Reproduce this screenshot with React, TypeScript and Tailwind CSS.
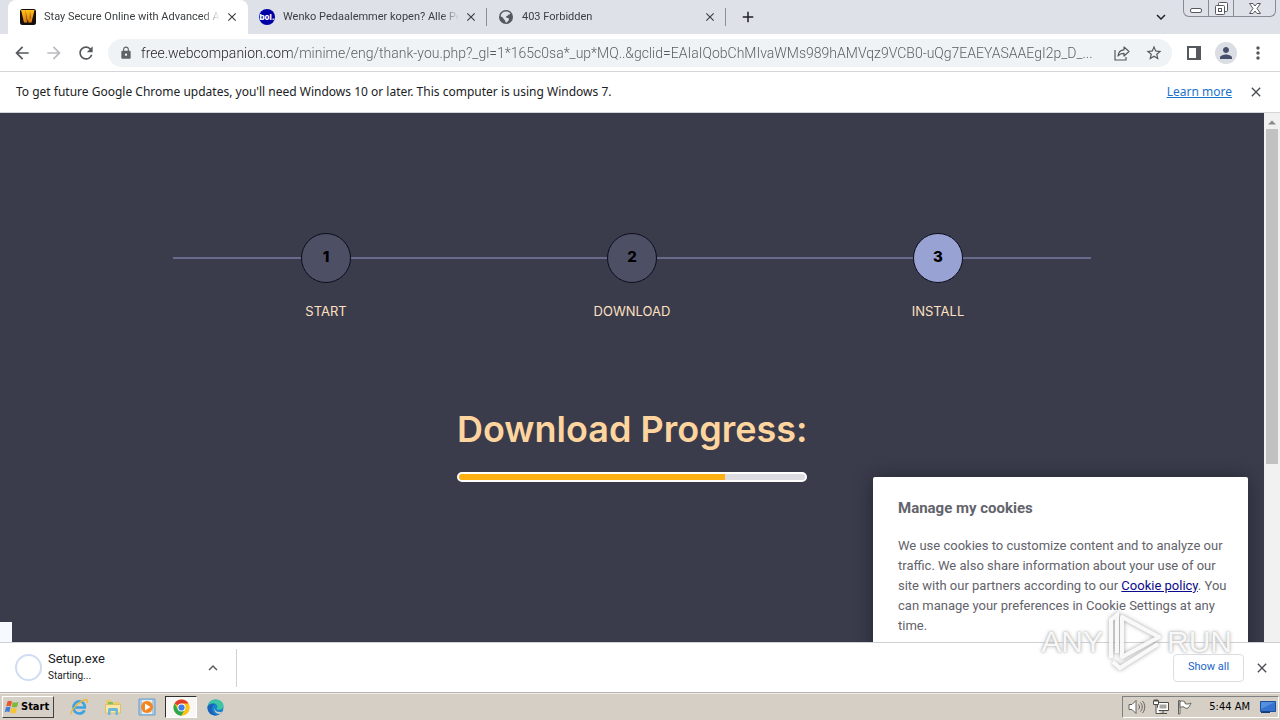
import type { ReactNode } from "react";
import {
  MdAdd,
  MdArrowBack,
  MdArrowForward,
  MdClose,
  MdKeyboardArrowDown,
  MdKeyboardArrowUp,
  MdLock,
  MdMoreVert,
  MdPerson,
  MdRefresh,
  MdStarBorder,
} from "react-icons/md";

const CompanionIcon = () => (
  <svg viewBox="0 0 16 16" className="size-4 shrink-0" aria-hidden="true">
    <defs>
      <linearGradient id="companion" x1="0" y1="0" x2="0" y2="1">
        <stop offset="0" stopColor="#ffc21c" />
        <stop offset="1" stopColor="#e07a10" />
      </linearGradient>
    </defs>
    <rect width="16" height="16" rx="2.5" fill="#15100b" />
    <path d="M1 1h13.500l-3 12.500H4z" fill="url(#companion)" />
    <path d="M5.500 1l1.800 8.500L6 13zM10 2l1 6.500L9.500 12z" fill="#7a4407" opacity=".65" />
    <path d="M7.800 10l.8 3.500H7z" fill="#15100b" />
  </svg>
);

const BolIcon = () => (
  <span className="flex size-4 shrink-0 items-center justify-center rounded-full bg-[#0000a4] pb-px font-['Inter',sans-serif] text-[8px] leading-none font-extrabold text-white">
    bol.
  </span>
);

const GlobeIcon = () => (
  <svg viewBox="0 0 16 16" className="size-4 shrink-0" aria-hidden="true">
    <circle cx="8" cy="8" r="7" fill="#55585e" />
    <path d="M8 2.500c2 0 3.500.8 4.500 2-.8 1.200-2 .8-2.500 1.800-.5 1-2 .7-2 1.700s1.500.6 2.500 1.200c.8.600.5 2-.4 2.800-.8.800-1.100 1.500-2.100 1.500-.8 0-.4-1.300-.9-2.100-.5-.8-1.600-.8-1.600-1.900C5.500 8.500 3.500 8 2.600 7.200 3 4.500 5.200 2.500 8 2.500z" fill="#dee1e8" />
  </svg>
);

const ShareIcon = () => (
  <svg viewBox="0 0 16 16" className="size-4" fill="none" stroke="currentColor" strokeWidth="1.200" aria-hidden="true">
    <path d="M1 5v10h11v-3" />
    <path d="M4 11c.4-4 2.600-6 6-6.200V2l5 4.500-5 4.500V8.300C7.500 8.300 5.600 9 4 11z" strokeLinejoin="round" />
  </svg>
);

const SidePanelIcon = () => (
  <svg viewBox="0 0 14 14" className="size-[14px]" aria-hidden="true">
    <path d="M0 0h14v14H0zM2 2v10h7V2z" fill="currentColor" fillRule="evenodd" />
  </svg>
);

const WindowsFlag = () => (
  <svg viewBox="0 0 16 16" className="size-4" aria-hidden="true">
    <path d="M3.500 2.500C5 1.500 6.500 1.500 8 2.500L6.800 7.500C5.300 6.600 3.800 6.600 2.200 7.500z" fill="#e8542c" />
    <path d="M8.800 2.900c1.700 1 3.200 1 5.700-.1l-1.300 5c-2 1-3.700 1-5.500 0z" fill="#7cb83e" />
    <path d="M2 8.300c1.500-.9 3-.9 4.600 0l-1.300 5c-1.500-1-3-1-4.600 0z" fill="#3f7fd6" />
    <path d="M7.500 8.800c1.700 1 3.400 1 5.500 0l-1.300 5c-2 1-3.700.9-5.500-.2z" fill="#f8c32c" />
  </svg>
);

const ExplorerIcon = () => (
  <svg viewBox="0 0 18 18" className="size-[18px]" aria-hidden="true">
    <path d="M3.500 9.500h11.300C15 5.800 12.600 3.300 9.300 3.300S3.500 6 3.500 9.500s2.500 6 5.800 6c2.500 0 4.400-1.200 5.200-3.300" fill="none" stroke="#3ba3e2" strokeWidth="2.600" />
    <path d="M1.500 16.500C-.5 13 10 2.500 16 1.500c1.800 0 1.500 2 .5 3.500" fill="none" stroke="#edb935" strokeWidth="1.300" />
  </svg>
);

const FolderIcon = () => (
  <svg viewBox="0 0 18 18" className="size-[18px]" aria-hidden="true">
    <path d="M2 2h5l1 2h8v11H2z" fill="#e9cb6c" />
    <path d="M4 4h5v3H4z" fill="#7fbf6a" />
    <path d="M1.500 6.500h15V15h-15z" fill="#f7e7a2" stroke="#d4b457" strokeWidth=".7" />
    <path d="M4 17v-5c0-1.500 1-2 2-2h6c1 0 2 .5 2 2v5h-2.500v-4h-5v4z" fill="#6fb6dc" />
  </svg>
);

const MediaIcon = () => (
  <svg viewBox="0 0 18 18" className="size-[18px]" aria-hidden="true">
    <path d="M1 1h16v16H1z" fill="#a9cbe6" stroke="#6b9cc4" />
    <path d="M4 2h10v14H4z" fill="#e3edf4" />
    <circle cx="9" cy="9" r="6" fill="#f5861f" />
    <path d="M7 5.500v7l5.500-3.500z" fill="#fff" />
  </svg>
);

const ChromeIcon = () => (
  <svg viewBox="0 0 18 18" className="size-[17px]" aria-hidden="true">
    <circle cx="9" cy="9" r="8.500" fill="#fbc116" />
    <path d="M9 9L1.640 4.750A8.500 8.500 0 0 1 16.360 4.750H9z" fill="#e33b2e" />
    <path d="M1.640 4.750L5.320 11.120 9 13.250 9 17.500A8.500 8.500 0 0 1 1.640 4.750z" fill="#2da94f" />
    <path d="M5.320 11.120h7.360L9 17.500A8.500 8.500 0 0 1 5 16.500z" fill="#2da94f" />
    <path d="M12.680 11.120L16.360 4.750A8.500 8.500 0 0 1 9 17.500z" fill="#fbc116" />
    <circle cx="9" cy="9" r="4.250" fill="#fff" />
    <circle cx="9" cy="9" r="3.300" fill="#3f7de8" />
  </svg>
);

const EdgeIcon = () => (
  <svg viewBox="0 0 18 18" className="size-[17px]" aria-hidden="true">
    <circle cx="9" cy="9" r="8.500" fill="#1583d0" />
    <path d="M.6 8C1.200 3.600 4.800.5 9.200.5c4.600 0 8.300 3 8.300 6.700 0 2.600-2 4.300-4.500 4.300-1.700 0-2.800-.6-2.800-1.300 0-.5.8-.8.8-2C11 6 9 4.700 6.500 4.700 3.900 4.700 1.800 6 .6 8z" fill="#3cc4a4" />
    <path d="M.6 8C2 5.900 4 4.700 6.500 4.700c1 0 2 .2 2.700.6C6.500 6 5.400 8 5.400 10.200c0 3 2 5.800 5.200 6.900C5 18.500-.2 14 .6 8z" fill="#1b62b8" />
    <path d="M8 9.500c0 3 3 5 6.500 4.200.8-.2 1.300-.5 1.900-.8-.5 1-1.400 2.100-2.400 2.900C10 16 7 13 8 9.500z" fill="#d4cdc4" />
  </svg>
);

const SpeakerIcon = () => (
  <svg viewBox="0 0 18 16" className="h-4 w-[18px]" fill="none" stroke="#63615e" aria-hidden="true">
    <path d="M1 5.500h3L8 1.500v13l-4-4H1z" fill="#fff" />
    <path d="M10.500 5.500c1.300 1.500 1.300 3.500 0 5M12.500 3.500c2.300 2.500 2.300 6.500 0 9M14.500 2c3 3.500 3 8.500 0 12" />
  </svg>
);

const NetworkIcon = () => (
  <svg viewBox="0 0 18 16" className="h-4 w-[18px]" fill="none" stroke="#4f4d4a" aria-hidden="true">
    <path d="M5.500 3.500h11v8h-11zM8 14.500h7M11 11.500v3" fill="#fff" />
    <path d="M7.500 5.500h7v4h-7z" fill="#a8a5a0" stroke="none" />
    <path d="M1.500 1.500h5v4h-5zM3 0v3M5 0v3M4 5.500v9h4" fill="#fff" />
  </svg>
);

const FlagIcon = () => (
  <svg viewBox="0 0 18 16" className="h-4 w-[18px]" fill="#fff" stroke="#63615e" aria-hidden="true">
    <path d="M2.500 15V1.500h1.500V15z" />
    <path d="M4 2.500c2-1 3.500-.5 5 .5v1.500c2 1 4 .5 6-.5-1 2.500-2 4-3 5-1.500.7-3 .2-4-1-1.500-.5-3 0-4 .5z" />
  </svg>
);

const DesktopIcon = () => (
  <svg viewBox="0 0 16 14" className="h-[14px] w-4" aria-hidden="true">
    <path d="M.5 1.500h15v10H.5z" fill="#3573cf" stroke="#1d4f9c" />
    <path d="M1 2h14L1 9z" fill="#5590e0" />
    <path d="M1 11.500h9V13H1z" fill="#163a78" />
  </svg>
);

interface TabProps {
  icon: ReactNode;
  title: string;
  selected?: boolean;
}

function Tab({ icon, title, selected = false }: TabProps) {
  return (
    <div
      className={
        selected
          ? "flex w-60 items-center rounded-t-lg bg-white pr-2 pl-3"
          : "my-2 flex w-[239px] items-center border-r border-[#8b8e94] pr-[7px] pl-[11px]"
      }
    >
      <button
        type="button"
        role="tab"
        aria-selected={selected}
        className="flex min-w-0 flex-1 items-center gap-2 text-left text-[#3c4043]"
      >
        {icon}
        <span className="min-w-0 flex-1 overflow-hidden mask-r-from-90% text-[11px] leading-4 whitespace-nowrap">{title}</span>
      </button>
      <button type="button" aria-label={`Close ${title}`} className="ml-1 flex size-4 items-center justify-center text-[#3c4043]">
        <MdClose className="size-[14px]" />
      </button>
    </div>
  );
}

function ToolButton({ label, children }: { label: string; children: ReactNode }) {
  return (
    <button type="button" aria-label={label} className="flex h-7 w-8 shrink-0 items-center justify-center text-[#55585d]">
      {children}
    </button>
  );
}

function WindowControls() {
  return (
    <div className="mr-1 flex h-[17px] rounded-b-md border border-t-0 border-[#888b94] text-[#55585f]">
      <button type="button" aria-label="Minimize" className="flex w-[25px] items-end justify-center border-r border-[#888b94] pb-[3px]">
        <svg viewBox="0 0 12 5" className="h-[5px] w-3" aria-hidden="true">
          <rect x=".5" y=".5" width="11" height="4" rx="1.500" fill="#fff" stroke="currentColor" />
        </svg>
      </button>
      <button type="button" aria-label="Restore" className="flex w-[25px] items-center justify-center border-r border-[#888b94]">
        <svg viewBox="0 0 13 13" className="size-[13px]" fill="#fff" stroke="currentColor" aria-hidden="true">
          <rect x="3.500" y=".5" width="9" height="9" rx="1" />
          <rect x=".5" y="3.500" width="9" height="9" rx="1" />
          <rect x="3.500" y="6.500" width="3" height="3" />
        </svg>
      </button>
      <button type="button" aria-label="Close window" className="flex w-[41px] items-center justify-center">
        <svg viewBox="0 0 12 11" className="h-[11px] w-3" fill="#fff" stroke="currentColor" aria-hidden="true">
          <path d="M.5.5h3.500L6 3 8 .5h3.500L8 5.500l3.500 5H8L6 8l-2 2.500H.5l3.500-5z" />
        </svg>
      </button>
    </div>
  );
}

const steps = [
  { number: 1, label: "START", circle: "bg-[#4d4f65]" },
  { number: 2, label: "DOWNLOAD", circle: "bg-[#4d4f65]" },
  { number: 3, label: "INSTALL", circle: "bg-[#98a3d3]" },
];

function Steps() {
  return (
    <ol className="mx-auto grid w-full max-w-[918px] grid-cols-3">
      {steps.map((step) => (
        <li key={step.number} className="flex flex-col items-center">
          <div className="flex w-full items-center">
            <span className="h-[2px] flex-1 bg-[#686a8c]" />
            <span
              className={`flex size-[50px] items-center justify-center rounded-full border border-[#0c0c1c] pb-[2px] font-['Inter',sans-serif] text-[15px] font-extrabold text-black ${step.circle}`}
            >
              {step.number}
            </span>
            <span className="h-[2px] flex-1 bg-[#686a8c]" />
          </div>
          <span className="mt-[18px] font-['Inter',sans-serif] text-[13px] leading-5 text-[#ffe0c0]">{step.label}</span>
        </li>
      ))}
    </ol>
  );
}

function Page() {
  const progress = 77;
  return (
    <main className="relative min-w-0 flex-1 overflow-hidden bg-[#3a3c4c] pt-[120px]">
      <Steps />
      <section className="mx-auto mt-20 w-[350px]">
        <h1 className="text-center font-['Inter',sans-serif] text-4xl leading-[56px] font-semibold whitespace-nowrap text-[#ffd59f]">
          Download Progress:
        </h1>
        <div
          role="progressbar"
          aria-label="Download progress"
          aria-valuenow={progress}
          className="mt-[15px] h-[10px] overflow-hidden rounded-full border-2 border-white bg-[#dcdce2]"
        >
          <div className="h-full bg-[#ffb011]" style={{ width: `${progress}%` }} />
        </div>
      </section>

      <aside className="absolute top-[364px] right-4 w-[375px] rounded-t-xs bg-white pt-5 pr-5 pb-8 pl-[25px] font-['Roboto',sans-serif] text-[#63636b] shadow-[0_0_20px_rgba(0,0,0,0.35)]">
        <h2 className="text-[15px] leading-[22px] font-bold">Manage my cookies</h2>
        <p className="mt-[17px] text-[13px] leading-5">
          We use cookies to customize content and to analyze our traffic. We also share information about your use of our
          site with our partners according to our{" "}
          <a href="#cookie-policy" className="text-[#0a0a8c] underline">
            Cookie policy
          </a>
          . You can manage your preferences in Cookie Settings at any time.
        </p>
      </aside>
      <div className="absolute bottom-0 left-0 h-5 w-3 bg-[#f6f9fe]" />
    </main>
  );
}

function Scrollbar() {
  return (
    <div className="flex w-4 flex-col items-center bg-[#f1f1f1]" aria-hidden="true">
      <svg viewBox="0 0 16 16" className="size-4 shrink-0">
        <path d="M4 11.500h8L8 7.500z" fill="#8a8a8a" />
      </svg>
      <span className="h-[335px] w-3 bg-[#c1c1c1]" />
    </div>
  );
}

function Watermark() {
  return (
    <div
      className="pointer-events-none absolute right-12 bottom-[48px] flex items-center gap-1 font-['Liberation_Sans',sans-serif] text-[30px] leading-[60px] text-white/90 [text-shadow:0_0_2px_#aaa,0_0_4px_#bbb]"
      aria-hidden="true"
    >
      <span>ANY</span>
      <svg viewBox="0 0 56 60" className="h-[60px] w-14 drop-shadow-[0_0_2px_#999]" fill="none" stroke="#fff" strokeOpacity=".9" strokeWidth="4">
        <path d="M4 46V8l6-5v38" />
        <path d="M15 5v40l37-20z" strokeLinejoin="round" />
        <path d="M6 50l7 6 38-24" />
      </svg>
      <span>RUN</span>
    </div>
  );
}

const pinned = [
  { name: "Internet Explorer", icon: <ExplorerIcon />, active: false },
  { name: "Windows Explorer", icon: <FolderIcon />, active: false },
  { name: "Media Player", icon: <MediaIcon />, active: false },
  { name: "Google Chrome", icon: <ChromeIcon />, active: true },
  { name: "Microsoft Edge", icon: <EdgeIcon />, active: false },
];

function Taskbar() {
  return (
    <footer className="flex h-7 shrink-0 items-center border-t border-[#b9b6b1] bg-[#d6cfc6] pt-px pr-px pl-[2px] shadow-[inset_0_1px_0_#efebe6]">
      <button
        type="button"
        className="flex h-[22px] w-[52px] items-center gap-px border border-t-white border-r-[#404040] border-b-[#404040] border-l-white pl-px font-['DejaVu_Sans_Condensed','DejaVu_Sans',sans-serif] text-[11px] font-bold text-black"
      >
        <WindowsFlag />
        Start
      </button>
      <div className="ml-[9px] flex gap-[2px]">
        {pinned.map((app) => (
          <button
            key={app.name}
            type="button"
            aria-label={app.name}
            className={
              app.active
                ? "flex h-[22px] w-8 items-center justify-center border border-t-[#303030] border-r-white border-b-white border-l-[#303030] bg-[#f8f7f5]"
                : "flex h-[22px] w-8 items-center justify-center"
            }
          >
            {app.icon}
          </button>
        ))}
      </div>
      <div className="ml-auto flex h-[22px] items-center gap-[6px] border border-t-[#808080] border-r-white border-b-white border-l-[#808080] pr-[2px] pl-[5px]">
        <SpeakerIcon />
        <NetworkIcon />
        <FlagIcon />
        <time className="mr-1 ml-[9px] font-['DejaVu_Sans_Condensed','DejaVu_Sans',sans-serif] text-[11px] text-black">5:44 AM</time>
        <DesktopIcon />
      </div>
    </footer>
  );
}

export default function App() {
  return (
    <div className="relative flex h-screen flex-col overflow-hidden bg-white font-['Roboto','Noto_Sans',sans-serif] text-[#202124]">
      <header className="shrink-0">
        <div className="flex h-[34px] bg-[#dee1e8] pl-2">
          <div role="tablist" className="flex">
            <Tab selected icon={<CompanionIcon />} title="Stay Secure Online with Advanced A" />
            <Tab icon={<BolIcon />} title="Wenko Pedaalemmer kopen? Alle Pe" />
            <Tab icon={<GlobeIcon />} title="403 Forbidden" />
          </div>
          <button type="button" aria-label="New tab" className="ml-3 flex w-5 items-center justify-center">
            <MdAdd className="size-[18px]" />
          </button>
          <button type="button" aria-label="Search tabs" className="mr-3 ml-auto flex w-5 items-center justify-center">
            <MdKeyboardArrowDown className="size-[18px]" />
          </button>
          <WindowControls />
        </div>
        <div className="flex h-[38px] items-center gap-[6px] border-b border-[#d5d6d9] px-[6px]">
          <div className="flex">
            <ToolButton label="Back">
              <MdArrowBack className="size-5" />
            </ToolButton>
            <button type="button" aria-label="Forward" disabled className="flex h-7 w-8 items-center justify-center text-[#b9bbbe]">
              <MdArrowForward className="size-5" />
            </button>
            <ToolButton label="Reload">
              <MdRefresh className="size-5" />
            </ToolButton>
          </div>
          <div className="flex h-7 min-w-0 flex-1 items-center rounded-full bg-[#f0f3f5] pr-[2px] pl-[11px]">
            <MdLock className="size-[14px] shrink-0 text-[#5f6368]" />
            <input
              type="text"
              aria-label="Address"
              readOnly
              value="free.webcompanion.com/minime/eng/thank-you.php?_gl=1*165c0sa*_up*MQ..&gclid=EAIaIQobChMIvaWMs989hAMVqz9VCB0-uQg7EAEYASAAEgI2p_D_..."
              className="ml-2 min-w-0 flex-1 bg-[linear-gradient(to_right,#202124_151px,#55595e_151px)] bg-clip-text text-sm font-light text-transparent outline-none"
            />
            <ToolButton label="Share">
              <ShareIcon />
            </ToolButton>
            <ToolButton label="Bookmark">
              <MdStarBorder className="size-[18px]" />
            </ToolButton>
          </div>
          <div className="flex">
            <ToolButton label="Side panel">
              <SidePanelIcon />
            </ToolButton>
            <ToolButton label="Profile">
              <span className="flex size-[22px] items-center justify-center rounded-full bg-[#dadde3] text-[#46506b]">
                <MdPerson className="size-[18px]" />
              </span>
            </ToolButton>
            <ToolButton label="Menu">
              <MdMoreVert className="size-5" />
            </ToolButton>
          </div>
        </div>
        <div className="flex h-[41px] items-center border-b border-[#d5d6d9] pr-4 pl-4 font-['Noto_Sans',sans-serif] text-xs">
          <p>To get future Google Chrome updates, you'll need Windows 10 or later. This computer is using Windows 7.</p>
          <a href="#learn-more" className="ml-auto text-[#1a73c8] underline">
            Learn more
          </a>
          <button type="button" aria-label="Dismiss" className="ml-4 flex size-4 items-center justify-center text-[#4a4d51]">
            <MdClose className="size-4" />
          </button>
        </div>
      </header>

      <div className="flex min-h-0 flex-1">
        <Page />
        <Scrollbar />
      </div>

      <div className="flex h-[50px] shrink-0 items-center border-t border-[#cfd0d3] bg-white pr-[10px] pl-[15px]">
        <span className="size-[27px] rounded-full border-2 border-[#cfdcf4]" />
        <div className="ml-[6px] w-[155px] pb-[2px]">
          <p className="text-[13px] leading-[18px]">Setup.exe</p>
          <p className="text-[10px] leading-4">Starting...</p>
        </div>
        <button type="button" aria-label="Download options" className="flex size-5 items-center justify-center text-[#55585d]">
          <MdKeyboardArrowUp className="size-[18px]" />
        </button>
        <span className="ml-[13px] h-[38px] w-px bg-[#cfd0d3]" />
        <button type="button" className="ml-auto h-7 w-[71px] rounded-sm border border-[#dcdde0] text-[11px] text-[#1a66c8]">
          Show all
        </button>
        <button type="button" aria-label="Close downloads" className="ml-[10px] flex size-4 items-center justify-center text-[#4a4d51]">
          <MdClose className="size-4" />
        </button>
      </div>

      <Taskbar />
      <Watermark />
    </div>
  );
}
